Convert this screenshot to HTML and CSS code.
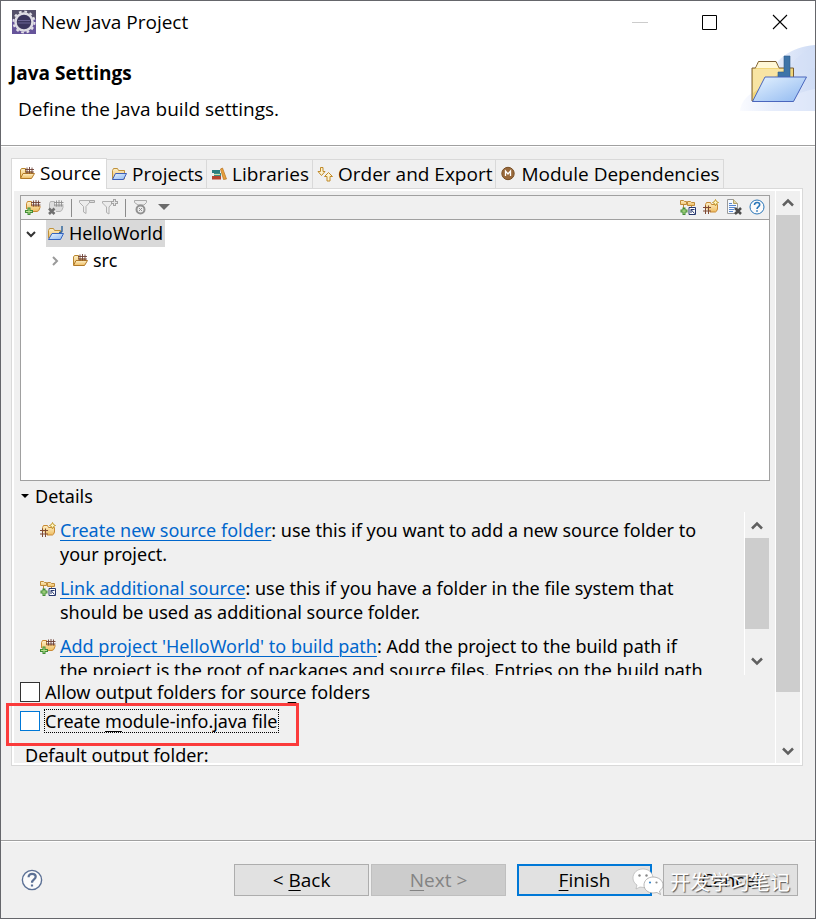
FILE: index.html
```html
<!DOCTYPE html>
<html lang="en">
<head>
    <meta charset="UTF-8">
    <meta name="viewport" content="width=device-width, initial-scale=1.0">
    <title>New Java Project</title>
    <link rel="stylesheet" href="styles.css">
</head>
<body>
    <!-- shared icons -->
    <svg class="defs" aria-hidden="true">
        <defs>
            <linearGradient id="tan" x1="0" y1="0" x2="0" y2="1">
                <stop offset="0" stop-color="#fdf0c8"/>
                <stop offset="1" stop-color="#efbd62"/>
            </linearGradient>
            <linearGradient id="blue" x1="0" y1="0" x2="1" y2="1">
                <stop offset="0" stop-color="#e6f3ff"/>
                <stop offset="1" stop-color="#8fb8f0"/>
            </linearGradient>
        </defs>
        <symbol id="i-source" viewBox="0 0 16 16">
            <path d="M1.500 13V5l1-1.500h4V7H13v2" fill="url(#tan)" stroke="#b8862f"/>
            <path d="M1.500 13.500 4 8.500h11.500L12.500 13.500z" fill="url(#tan)" stroke="#b27a28"/>
            <path d="M6 4.500h9M6 7h9M8 2.500v6M10.500 2v6.500M13 2.500v6" fill="none" stroke="#6d4034" stroke-width=".9"/>
        </symbol>
        <symbol id="i-projects" viewBox="0 0 16 16">
            <path d="M1.500 13V4.500l1-2h4l1 2h6V13z" fill="url(#tan)" stroke="#bf913b"/>
            <path d="M1.500 13.500 4.500 7.500h11l-3 6z" fill="url(#blue)" stroke="#3e5fb8"/>
        </symbol>
        <symbol id="i-java" viewBox="0 0 16 16">
            <path d="M.5 13V5.500l1-2h4l1 2h6V13z" fill="url(#tan)" stroke="#bf913b"/>
            <path d="M.5 14.500 4 8.500h11.500l-3 6z" fill="url(#blue)" stroke="#3564c0"/>
            <path d="M14 1v4.500q0 2-2 2h-1" fill="none" stroke="#35689c" stroke-width="1.500"/>
        </symbol>
        <symbol id="i-books" viewBox="0 0 16 16">
            <path d="M1 4h8v3H1z" fill="#2c7f80"/>
            <path d="M3 7h7v3H3z" fill="#3f8f86"/>
            <path d="M1 10h9v3.500H1z" fill="#b7452e"/>
            <path d="M3 8.500h6" stroke="#cfe3b0"/>
            <path d="m9.500 3 2-1 4 11-3 .5z" fill="#e8a23c" stroke="#b8701f" stroke-width=".7"/>
        </symbol>
        <symbol id="i-order" viewBox="0 0 16 16">
            <path d="M3.500 1.500h2.500v4h2L4.500 9.500 1 5.500h2.500z" fill="#fdf3cf" stroke="#c08a2a"/>
            <path d="M10 15h3v-4.500h2.500l-4-4-4 4H10z" fill="#fdf3cf" stroke="#c08a2a"/>
        </symbol>
        <symbol id="i-module" viewBox="0 0 16 16">
            <circle cx="8" cy="7.500" r="6.200" fill="#98693b" stroke="#7a5026"/>
            <path d="M5.500 10V5L8 8l2.500-3v5" fill="none" stroke="#fff" stroke-width="1.300"/>
        </symbol>
        <symbol id="i-add" viewBox="0 0 16 16">
            <path d="M1.500 10V4.500l1-2h4V7h8.500v1.500q-1 4-3 4H6" fill="url(#tan)" stroke="#c98a34"/>
            <path d="M6 3.500h9.500M6 6h9.500M8.500 1.500v6M11 1v6.500M13.500 1.500v6" fill="none" stroke="#6d4034" stroke-width=".9"/>
            <path d="M2.500 8.500h3v2.500h2.500v3H5.500v2h-3v-2H0v-3h2.500z" fill="#418c35"/>
            <path d="M4 9.500V15M1 12.500h6" stroke="#b7e08d"/>
        </symbol>
        <symbol id="i-remove" viewBox="0 0 16 16">
            <path d="M1.500 10V4.500l1-2h4V7h8.500v1.500q-1 4-3 4H8" fill="#dedede" stroke="#b4b4b4"/>
            <path d="M6 3.500h9.500M6 6h9.500M8.500 1.500v6M11 1v6.500M13.500 1.500v6" fill="none" stroke="#8f8f8f" stroke-width=".9"/>
            <path d="m1 9.500 5.500 5.500M6.500 9.500 1 15" stroke="#6f6f6f" stroke-width="2.500"/>
        </symbol>
        <symbol id="i-filter-minus" viewBox="0 0 16 16">
            <path d="M.5 1.500h10v2l-3.500 4v7l-2.500-1.500V7.500l-4-4z" fill="#ececec" stroke="#b0b0b0"/>
            <path d="M10.500 1.500h5v2h-5z" fill="#ddd" stroke="#a8a8a8"/>
        </symbol>
        <symbol id="i-filter-plus" viewBox="0 0 16 16">
            <path d="M.5 2.500h10v1.500l-3.500 4v7l-2.500-1.500V8l-4-4z" fill="#ececec" stroke="#b0b0b0"/>
            <path d="M12.500 0v7M9 3.500h7" stroke="#a4a4a4" stroke-width="3"/>
            <path d="M12.500 1v5M10 3.500h5" stroke="#e6e6e6"/>
        </symbol>
        <symbol id="i-config" viewBox="0 0 16 16">
            <path d="M1.500 1.500h12v2L11 6H5L1.500 3.500z" fill="#ececec" stroke="#ababab"/>
            <circle cx="7.500" cy="10.500" r="4" fill="#ededed" stroke="#929292" stroke-width="2"/>
            <path d="m6 9 3 3M9 9l-3 3" stroke="#929292"/>
        </symbol>
        <symbol id="i-link" viewBox="0 0 16 16">
            <path d="M.5 5.500v-4h3l1 1h2v3zM7.500 6.500v-4h3l1 1h3v3z" fill="url(#tan)" stroke="#bf8a38"/>
            <path d="M3.500 6v4M11.500 7v1" stroke="#bf8a38"/>
            <path d="M4 8.500V16M.5 12h7" stroke="#418c35" stroke-width="3"/>
            <path d="M4 10v5M1.500 12h5" stroke="#b7e08d"/>
            <path d="M9 8.500h6.500v7H9z" fill="#fff" stroke="#25366d"/>
            <path d="M11 14v-3.500h3.500M11 10.500l3.500 4" fill="none" stroke="#25366d"/>
        </symbol>
        <symbol id="i-new" viewBox="0 0 16 16">
            <path d="M2.500 9V5.500l1-2h4l1 2h6V10q-1 3-2 3H7" fill="url(#tan)" stroke="#c98a34"/>
            <path d="m12.500.5 1 2 2 1-2 1-1 2.500-1-2.500-2-1 2-1z" fill="#fff4bb" stroke="#c39a32"/>
            <path d="M0 8.500h8M0 12h8M2.500 6.500v8.500M5.500 6.500v8.500" fill="none" stroke="#804a33"/>
        </symbol>
        <symbol id="i-clear" viewBox="0 0 16 16">
            <path d="M1.500.5h6l4 4v10h-10z" fill="#f5faff" stroke="#9a9a9a"/>
            <path d="M7.500.5v4h4" fill="#e4d5a0" stroke="#b4a36a"/>
            <path d="M3 4.500h3M3 6.500h7M3 8.500h6M3 10.500h5M3 12.500h4" stroke="#5886cd"/>
            <path d="m9 9 6 6M15 9l-6 6" stroke="#4c4c4c" stroke-width="2.500"/>
        </symbol>
        <symbol id="i-help" viewBox="0 0 16 16">
            <circle cx="8" cy="8" r="7" fill="#fff" fill-opacity=".7" stroke="currentColor"/>
            <path d="M5.500 6c0-3.500 5.200-3 5.200-.3C10.700 7.600 8 7.500 8 10M8 11.200v1.600" fill="none" stroke="currentColor" stroke-width="1.600"/>
        </symbol>
        <symbol id="i-up" viewBox="0 0 12 10">
            <path d="M1 8.500 6 3.500l5 5" fill="none" stroke="currentColor" stroke-width="2.500"/>
        </symbol>
        <symbol id="i-down" viewBox="0 0 12 10">
            <path d="m1 1.500 5 5 5-5" fill="none" stroke="currentColor" stroke-width="2.500"/>
        </symbol>
    </svg>

    <div class="dialog">
        <header class="header">
            <div class="titlebar">
                <svg class="app-icon" viewBox="0 0 24 24">
                    <path d="M0 0h24v24H0z" fill="#66549a"/>
                    <path d="M0 0h24v9H0z" fill="#55506a"/>
                    <circle cx="12" cy="12" r="10.500" fill="none" stroke="#e4e2e8" stroke-width="2" stroke-dasharray="2.700 2.800"/>
                    <circle cx="12" cy="12" r="8.500" fill="#3b355e" stroke="#dedce4" stroke-width="2.500"/>
                    <path d="M6 10.500h12M5.500 13h13" stroke="#6b6494"/>
                </svg>
                <span class="window-title">New Java Project</span>
                <div class="window-buttons">
                    <button aria-label="Minimize" disabled><svg viewBox="0 0 16 16"><path d="M0 8.500h16" stroke="#ccc"/></svg></button>
                    <button aria-label="Maximize"><svg viewBox="0 0 16 16"><path d="M.5 1.500h14v14H.5z" fill="none" stroke="#000"/></svg></button>
                    <button aria-label="Close"><svg viewBox="0 0 16 16"><path d="m1 1 14 14M15 1 1 15" stroke="#000" stroke-width="1.100"/></svg></button>
                </div>
            </div>
            <div class="intro">
                <div class="intro-text">
                    <h1>Java Settings</h1>
                    <p>Define the Java build settings.</p>
                </div>
                <svg class="banner" viewBox="0 0 75 66">
                    <defs>
                        <linearGradient id="sky" x1="0" y1="0" x2="1" y2="0">
                            <stop offset="0" stop-color="#fafbff"/>
                            <stop offset="1" stop-color="#cfdcf5"/>
                        </linearGradient>
                    </defs>
                    <path d="M0 66C2 52 12 48 24 40 34 14 50 2 75 0v66z" fill="url(#sky)"/>
                    <path d="M44 30Q56 8 75 3v20Q60 25 52 38z" fill="#d3dff6" opacity=".6"/>
                    <path d="M30 66q20-18 45-22v22z" fill="#e6edfb" opacity=".6"/>
                    <path d="M12 56V23h3.500l3-6.500H36l3 6.500h14.500v33z" fill="#f1d67a" stroke="#7a5c32"/>
                    <path d="M16 23l3-6h16.500l3 6z" fill="#fff7d6"/>
                    <path d="M13 24h32L13 48z" fill="#fbeab5" opacity=".7"/>
                    <path d="M44 11h6v21H38v-5h6z" fill="#3e74a8" stroke="#2d5d8c" stroke-width=".6"/>
                    <path d="M25 32h41.500L53.500 56.500H12.500z" fill="url(#blue)" stroke="#4a66bd"/>
                </svg>
            </div>
        </header>

        <main class="content">
            <div class="tabs" role="tablist">
                <button class="tab active" role="tab" aria-selected="true"><svg class="icon"><use href="#i-source"/></svg>Source</button>
                <button class="tab" role="tab"><svg class="icon"><use href="#i-projects"/></svg>Projects</button>
                <button class="tab" role="tab"><svg class="icon"><use href="#i-books"/></svg>Libraries</button>
                <button class="tab" role="tab"><svg class="icon"><use href="#i-order"/></svg>Order and Export</button>
                <button class="tab" role="tab"><svg class="icon"><use href="#i-module"/></svg>Module Dependencies</button>
            </div>

            <div class="panel">
                <div class="panel-body">
                    <div class="tree-box">
                        <div class="toolbar">
                            <button aria-label="Add to build path"><svg class="icon"><use href="#i-add"/></svg></button>
                            <button aria-label="Remove from build path"><svg class="icon"><use href="#i-remove"/></svg></button>
                            <span class="sep"></span>
                            <button aria-label="Exclude"><svg class="icon"><use href="#i-filter-minus"/></svg></button>
                            <button aria-label="Include"><svg class="icon"><use href="#i-filter-plus"/></svg></button>
                            <span class="sep"></span>
                            <button aria-label="Configure"><svg class="icon"><use href="#i-config"/></svg></button>
                            <button aria-label="More"><svg class="icon" viewBox="0 0 16 16"><path d="M2 5h12l-6 6z" fill="#6b6b6b"/></svg></button>
                            <span class="spacer"></span>
                            <button aria-label="Link source"><svg class="icon"><use href="#i-link"/></svg></button>
                            <button aria-label="New source folder"><svg class="icon"><use href="#i-new"/></svg></button>
                            <button aria-label="Clear all"><svg class="icon"><use href="#i-clear"/></svg></button>
                            <button class="help-blue" aria-label="Help"><svg class="icon"><use href="#i-help"/></svg></button>
                        </div>
                        <ul class="tree">
                            <li class="node">
                                <svg class="arrow" viewBox="0 0 12 12"><path d="m2 4 4 4 4-4" fill="none" stroke="#333" stroke-width="2"/></svg>
                                <span class="node-label selected"><svg class="icon"><use href="#i-java"/></svg>HelloWorld</span>
                            </li>
                            <li class="node child">
                                <svg class="arrow" viewBox="0 0 12 12"><path d="m4 2 4 4-4 4" fill="none" stroke="#9a9a9a" stroke-width="2"/></svg>
                                <span class="node-label"><svg class="icon"><use href="#i-source"/></svg>src</span>
                            </li>
                        </ul>
                    </div>

                    <h2 class="details-title"><svg viewBox="0 0 10 10"><path d="M1 3h8L5 7z"/></svg>Details</h2>
                    <div class="details">
                        <div class="details-list">
                            <div class="detail">
                                <svg class="icon"><use href="#i-new"/></svg>
                                <p><a href="#">Create new source folder</a>: use this if you want to add a new source folder to your project.</p>
                            </div>
                            <div class="detail">
                                <svg class="icon"><use href="#i-link"/></svg>
                                <p><a href="#">Link additional source</a>: use this if you have a folder in the file system that should be used as additional source folder.</p>
                            </div>
                            <div class="detail">
                                <svg class="icon"><use href="#i-add"/></svg>
                                <p><a href="#">Add project 'HelloWorld' to build path</a>: Add the project to the build path if the project is the root of packages and source files. Entries on the build path</p>
                            </div>
                        </div>
                        <div class="scrollbar">
                            <svg class="scroll-arrow"><use href="#i-up"/></svg>
                            <div class="track"><div class="thumb thumb-small"></div></div>
                            <svg class="scroll-arrow"><use href="#i-down"/></svg>
                        </div>
                    </div>

                    <div class="check">
                        <input type="checkbox" id="allow-output">
                        <label for="allow-output">Allow output folders for sour<u>c</u>e folders</label>
                    </div>
                    <div class="check marked">
                        <input type="checkbox" id="module-info">
                        <label for="module-info">Create <u>m</u>odule-info.java file</label>
                    </div>
                    <div class="output-label">Default output folder:</div>
                </div>
                <div class="scrollbar">
                    <svg class="scroll-arrow"><use href="#i-up"/></svg>
                    <div class="track"><div class="thumb thumb-large"></div></div>
                    <svg class="scroll-arrow"><use href="#i-down"/></svg>
                </div>
            </div>
        </main>

        <footer class="footer">
            <button class="help" aria-label="Help"><svg viewBox="0 0 16 16"><use href="#i-help"/></svg></button>
            <div class="nav-buttons">
                <button class="btn">&lt; <u>B</u>ack</button>
                <button class="btn" disabled><u>N</u>ext &gt;</button>
            </div>
            <button class="btn primary"><u>F</u>inish</button>
            <button class="btn">Cancel</button>
            <div class="watermark">
                <svg viewBox="0 0 32 28">
                    <path d="M11 1C5 1 1 5 1 10c0 3 1.500 5.500 4 7l-1 4 4-2 4 .5C18 19 21 15 21 10.500 21 5 17 1 11 1z" fill="#fff" stroke="#aaa" stroke-width=".6"/>
                    <path d="M21 9c-5 0-9 3.500-9 8s4 8 9 8l4-.5 3.500 2-1-3.500c2-1.500 3.500-3.500 3.500-6 0-4.500-4.500-8-10-8z" fill="#fff" stroke="#999" stroke-width=".7"/>
                    <circle cx="7.500" cy="7.500" r="1.200" fill="#888"/>
                    <circle cx="14.500" cy="7.500" r="1.200" fill="#888"/>
                    <circle cx="18" cy="14.500" r="1.100" fill="#3a86c8"/>
                    <circle cx="24.500" cy="14.500" r="1.100" fill="#888"/>
                </svg>
                <span>开发学习笔记</span>
            </div>
        </footer>
    </div>
</body>
</html>
```

FILE: styles.css
```css
*, *::after {
    box-sizing: border-box;
}

body {
    margin: 0;
    font-family: "Open Sans", "Noto Sans", sans-serif;
    font-size: 19px;
    line-height: 24px;
    color: #000;
}

h1, h2, p, ul {
    margin: 0;
    padding: 0;
}

button {
    font: inherit;
    color: inherit;
    border: none;
    background: none;
    padding: 0;
}

u {
    text-underline-offset: 3px;
    text-decoration-thickness: 1px;
}

.defs {
    position: absolute;
    width: 0;
    height: 0;
}

.icon {
    display: block;
    width: 16px;
    height: 16px;
    flex: none;
}

.dialog {
    display: flex;
    flex-direction: column;
    min-height: 100vh;
    border: 1px solid #65666b;
    background: #f0f0f0;
}

/* header */
.header {
    background: #fff;
    border-bottom: 1px solid #a0a0a0;
    padding-bottom: 24px;
}

.titlebar {
    display: flex;
    align-items: center;
    height: 42px;
    padding-left: 11px;
}

.app-icon {
    width: 24px;
    height: 24px;
}

.window-title {
    flex: 1;
    margin-left: 5px;
}

.window-buttons {
    display: flex;
}

.window-buttons button {
    width: 70px;
    height: 42px;
}

.window-buttons svg {
    display: block;
    width: 16px;
    height: 16px;
    margin: auto;
}

.intro {
    display: flex;
    justify-content: space-between;
    padding-top: 2px;
}

.intro-text {
    padding: 16px 0 0 9px;
}

.intro h1 {
    font-size: 19px;
    line-height: 24px;
}

.intro p {
    padding: 12px 0 0 8px;
}

.banner {
    width: 75px;
    height: 66px;
}

/* tabs */
.content {
    flex: 1;
    padding: 11px 12px 0 10px;
    border-top: 1px solid #fff;
}

.tabs {
    display: flex;
    align-items: flex-end;
}

.tab {
    display: flex;
    align-items: center;
    gap: 5px;
    height: 29px;
    padding: 0 3px 0 4px;
    border: 1px solid #d9d9d9;
    border-left: none;
    border-bottom: none;
    white-space: nowrap;
}

.tab.active {
    height: 31px;
    padding: 0 5px 3px 7px;
    margin-bottom: -1px;
    border-left: 1px solid #d9d9d9;
    background: #fff;
}

.panel {
    display: flex;
    gap: 5px;
    height: 578px;
    padding-left: 6px;
    border: 1px solid #d9d9d9;
    outline: 2px solid #fff;
    outline-offset: -3px;
}

.panel > .scrollbar {
    margin-right: 1px;
}

.panel-body {
    flex: 1;
    min-width: 0;
    margin: 2px 0 3px 2px;
    padding-top: 4px;
    overflow-y: clip;
    font-family: "Noto Sans", "Open Sans", sans-serif;
    font-size: 18px;
}

/* source folder tree */
.tree-box {
    border: 1px solid #a0a0a0;
    background: #fff;
}

.toolbar {
    display: flex;
    align-items: center;
    gap: 7px;
    height: 24px;
    padding: 0 4px;
    background: #f0f0f0;
    border-bottom: 1px solid #a0a0a0;
}

.toolbar .icon {
    height: 18px;
    padding-bottom: 2px;
}

.sep {
    width: 1px;
    height: 18px;
    background: #8c8c8c;
}

.spacer {
    flex: 1;
}

.help-blue {
    color: #2a76b8;
}

.tree {
    height: 260px;
    list-style: none;
}

.node {
    display: flex;
    align-items: center;
    gap: 9px;
    height: 27px;
    padding-left: 4px;
}

.node.child {
    padding-left: 28px;
}

.arrow {
    width: 12px;
    height: 12px;
}

.node-label {
    display: flex;
    align-items: center;
    gap: 5px;
    height: 27px;
    padding: 0 2px 1px;
}

.node-label.selected {
    background: #d9d9d9;
}

/* details */
.details-title {
    display: flex;
    align-items: center;
    gap: 5px;
    height: 31px;
    padding-bottom: 1px;
    font-size: 18px;
    font-weight: normal;
}

.details-title svg {
    width: 10px;
    height: 10px;
}

.details {
    display: flex;
    height: 163px;
    overflow: hidden;
}

.details-list {
    display: flex;
    flex: 1;
    flex-direction: column;
    gap: 10px;
    padding: 6px 36px 0 20px;
}

.detail {
    display: flex;
    flex: none;
    gap: 4px;
}

.detail .icon {
    margin-top: 4px;
}

.detail a {
    color: #0066cc;
    text-underline-offset: 3px;
    text-decoration-thickness: 1px;
}

/* scrollbars */
.scrollbar {
    display: flex;
    flex-direction: column;
    flex: none;
    width: 26px;
    padding-right: 1px;
    border-left: 1px solid #fff;
    color: #606060;
}

.scroll-arrow {
    flex: none;
    width: 12px;
    height: 10px;
    margin: 8px 6px;
}

.track {
    flex: 1;
}

.thumb {
    background: #cdcdcd;
}

.thumb-small {
    height: 82%;
}

.thumb-large {
    height: 91%;
}

/* options */
.check {
    display: flex;
    align-items: center;
    gap: 4px;
    height: 29px;
}

.details + .check {
    margin-top: 2px;
}

.check input {
    appearance: none;
    width: 20px;
    height: 20px;
    margin: 0;
    border: 1px solid #333;
    background: #fff;
}

.check label {
    padding: 0 1px;
}

.marked {
    position: relative;
}

.marked input {
    border-color: #0078d7;
}

.marked label {
    outline: 1px dotted #000;
    outline-offset: -1px;
}

.marked::after {
    content: "";
    position: absolute;
    top: -3px;
    left: -14px;
    width: 293px;
    height: 43px;
    border: 3px solid #fb3b3b;
    pointer-events: none;
}

.output-label {
    padding: 8px 0 0 5px;
}

/* footer */
.footer {
    position: relative;
    display: flex;
    align-items: center;
    gap: 11px;
    height: 78px;
    padding: 0 17px 0 20px;
    border-top: 1px solid #a0a0a0;
    box-shadow: inset 0 1px #fff;
}

.help {
    margin-right: auto;
    color: #5b7095;
}

.help svg {
    display: block;
    width: 22px;
    height: 22px;
}

.nav-buttons {
    display: flex;
    gap: 2px;
}

.btn {
    width: 135px;
    height: 32px;
    border: 1px solid #adadad;
    background: #e1e1e1;
}

.btn:disabled {
    border-color: #bfbfbf;
    background: #ccc;
    color: #838383;
}

.btn.primary {
    border: 2px solid #0078d7;
}

.watermark {
    position: absolute;
    right: 25px;
    bottom: 22px;
    display: flex;
    align-items: center;
    gap: 6px;
    font-family: "Noto Sans CJK SC", sans-serif;
    font-size: 20px;
    color: #fff;
    text-shadow: 1px 1px 1px #555;
}

.watermark svg {
    width: 32px;
    height: 28px;
}
```
